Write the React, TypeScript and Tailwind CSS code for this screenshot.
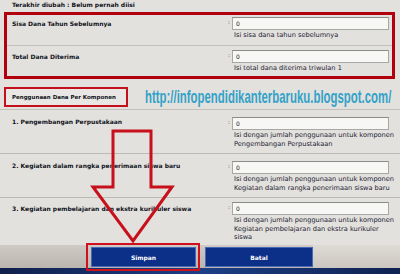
import React from "react";

const label = "font-['DejaVu_Sans',sans-serif] font-bold text-[6px] leading-[8px] text-[#10131c] whitespace-nowrap";
const helper = "font-['DejaVu_Sans',sans-serif] text-[6.6px] leading-[8.5px] text-[#1b2233] whitespace-nowrap";

const Field = ({ hint }: { hint: string[] }) => (
  <div className="flex">
    <div className="w-[9px] text-right pr-[2px] font-['DejaVu_Sans',sans-serif] text-[6px] leading-[10px] text-[#555]">:</div>
    <div className="w-[157px]">
      <div className="h-[13px] border border-[#a9a7a3] border-t-[#8d8b88] bg-[#f7f7f6] pl-[3px] font-['DejaVu_Sans',sans-serif] text-[6px] leading-[11px] text-[#222]">
        0
      </div>
      <div className={`${helper} pl-[2px] mt-[1px]`}>
        {hint.map((h) => (
          <div key={h}>{h}</div>
        ))}
      </div>
    </div>
  </div>
);

const Item = ({
  title,
  hint,
  h,
  inputTop,
  labelTop,
  line = true,
}: {
  title: string;
  hint: string[];
  h: string;
  inputTop: string;
  labelTop: string;
  line?: boolean;
}) => (
  <div className={`flex ${h} ${line ? "border-b border-[#bdbab5]" : ""}`}>
    <div className={`w-[223px] shrink-0 pl-[12px] ${labelTop} ${label}`}>{title}</div>
    <div className={inputTop}>
      <Field hint={hint} />
    </div>
  </div>
);

export default function App() {
  return (
    <div className="relative w-[400px] h-[274px] overflow-hidden bg-[#e3e1dd] flex flex-col">
      <div className={`h-[12px] pl-[12px] pt-[1px] ${label}`}>Terakhir diubah : Belum pernah diisi</div>

      {/* saldo */}
      <div className="mx-[4px] w-[391px] h-[67px] border-[3px] border-[#b3000f] flex flex-col">
        <div className="flex h-[31px] border-b border-[#c3c0bb]">
          <div className={`w-[216px] shrink-0 pl-[5px] pt-[5px] ${label}`}>Sisa Dana Tahun Sebelumnya</div>
          <div className="pt-[2px]">
            <Field hint={["Isi sisa dana tahun sebelumnya"]} />
          </div>
        </div>
        <div className="flex h-[30px]">
          <div className={`w-[216px] shrink-0 pl-[5px] pt-[7px] ${label}`}>Total Dana Diterima</div>
          <div className="pt-[4px]">
            <Field hint={["Isi total dana diterima triwulan 1"]} />
          </div>
        </div>
      </div>

      {/* header komponen */}
      <div className="h-[31px] flex items-end border-b border-[#c3c0bb]">
        <div className="shrink-0 mb-[2px] ml-[4px] w-[124px] h-[20px] border-2 border-[#c4101c] bg-[#e9e7e3] flex items-center pl-[6px]">
          <span className="font-['DejaVu_Sans',sans-serif] font-bold text-[5.5px] leading-[8px] text-[#10131c] whitespace-nowrap">
            Penggunaan Dana Per Komponen
          </span>
        </div>
        <div className="ml-[17px] mb-[2px] h-[20px] flex items-center">
          <span className="inline-block origin-left scale-x-[0.6] whitespace-nowrap font-['Liberation_Sans',sans-serif] font-bold text-[19px] leading-[20px] text-[#33a2c9]">
            http://infopendidikanterbaruku.blogspot.com/
          </span>
        </div>
      </div>

      <Item
        title="1. Pengembangan Perpustakaan"
        hint={["Isi dengan jumlah penggunaan untuk komponen", "Pengembangan Perpustakaan"]}
        h="h-[44px]"
        inputTop="pt-[7px]"
        labelTop="pt-[8px]"
      />
      <Item
        title="2. Kegiatan dalam rangka penerimaan siswa baru"
        hint={["Isi dengan jumlah penggunaan untuk komponen", "Kegiatan dalam rangka penerimaan siswa baru"]}
        h="h-[44px]"
        inputTop="pt-[7px]"
        labelTop="pt-[8px]"
      />
      <Item
        title="3. Kegiatan pembelajaran dan ekstra kurikuler siswa"
        hint={[
          "Isi dengan jumlah penggunaan untuk komponen",
          "Kegiatan pembelajaran dan ekstra kurikuler",
          "siswa",
        ]}
        h="h-[47px]"
        inputTop="pt-[4px]"
        labelTop="pt-[7px]"
        line={false}
      />

      {/* tombol */}
      <div className="flex h-[23px] bg-gradient-to-b from-[#cfcbc4] to-[#bab6af]">
        <div className="w-[86px]" />
        <div className="relative w-[114px]">
          <div className="absolute left-0 top-[-2px] w-[114px] h-[28px] border-2 border-[#d0101c]" />
          <div className="mt-[2px] ml-[5px] w-[105px] h-[20px] bg-[#0c2f88] border border-[#4a68b8] flex items-center justify-center font-['DejaVu_Sans',sans-serif] font-bold text-[6px] text-white">
            Simpan
          </div>
        </div>
        <div className="mt-[2px] ml-[5px] w-[108px] h-[20px] bg-[#0c2f88] border border-[#4a68b8] flex items-center justify-center font-['DejaVu_Sans',sans-serif] font-bold text-[6px] text-white">
          Batal
        </div>
        <div className="flex-1 bg-gradient-to-b from-[#dedbd5] to-[#cbc7c0]" />
      </div>
      <div className="flex-1 bg-gradient-to-r from-[#0f1f4a] via-[#1c3f86] to-[#0f2250]" />

      {/* panah */}
      <svg className="absolute inset-0 pointer-events-none" width="400" height="274" viewBox="0 0 400 274">
        <path
          d="M113 131 L151 131 L151 187 L172 187 L133 241 L93 187 L113 187 Z"
          fill="none"
          stroke="#c7101c"
          strokeWidth="3"
          strokeLinejoin="miter"
        />
      </svg>
    </div>
  );
}
